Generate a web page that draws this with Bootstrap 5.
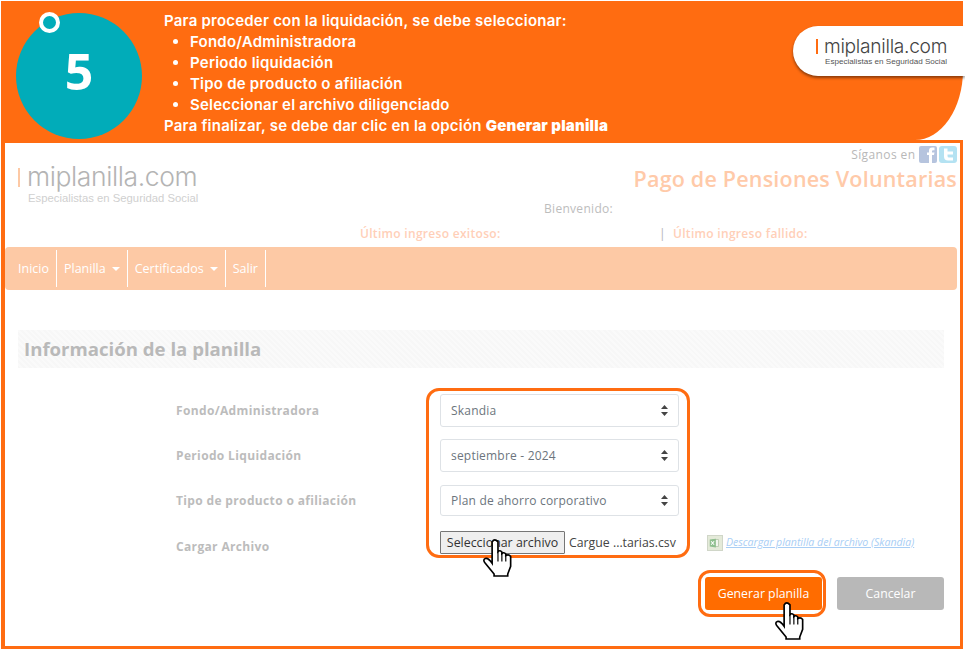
<!DOCTYPE html>
<html lang="es">
<head>
<meta charset="utf-8">
<title>Paso 5</title>
<link href="https://cdn.jsdelivr.net/npm/bootstrap@5.3.0/dist/css/bootstrap.min.css" rel="stylesheet">
<style>
html,body{margin:0;height:651px;overflow:hidden;background:#fff;font-family:"Open Sans","Liberation Sans",sans-serif}
.sheet{width:962px;margin:1px 0 0 1px;position:relative}
.banner{height:139px;background:#ff6c11;border-bottom-right-radius:48px 70px;color:#fff;position:relative}
.step{width:126px;height:126px;border-radius:50%;background:#01acb9;margin:12px 0 0 15px;flex:none;font-size:50px;font-weight:700;line-height:116px;text-align:center;position:relative}
.ring{position:absolute;left:23px;top:-1px;width:21px;height:21px;border:4px solid #fff;border-radius:50%;background:#01acb9}
.steps{margin-left:22px;padding-top:9px;font-family:Inter,"Noto Sans",sans-serif;font-size:15px;letter-spacing:.22px;font-weight:600;line-height:21px}
.steps ul{margin:0;padding-left:26px}
.pill{position:absolute;right:-2px;top:25px;width:172px;height:50px;background:#fff;border-radius:25px 0 0 25px;box-shadow:0 2px 3px rgba(0,0,0,.45);padding:9px 0 0 23px;color:#555;font-family:"Liberation Sans",sans-serif}
.brand-a{font-family:Inter,"Liberation Sans",sans-serif;font-weight:300;font-size:19.2px;line-height:22px;letter-spacing:-.3px;white-space:nowrap;color:#444}
.mk{display:inline-block;width:2px;height:15px;background:#ff6c11;margin-right:6px;vertical-align:-1px}
.brand-b{font-size:8.1px;line-height:10px;margin-left:9px;white-space:nowrap}
.frame{height:509px;border:3px solid #ff6c11;border-left-width:4px;background:#fff;color:#bbb}
.head-wrap{height:104px}
.brand-main{margin:18px 0 0 13px;font-family:"Liberation Sans",sans-serif;color:#b4b4b4;flex:none}
.brand-main .brand-a{font-size:26.5px;line-height:30px;letter-spacing:-.4px;color:#b4b4b4}
.brand-main .mk{background:#fdc9a5;height:19px;margin-right:7px;vertical-align:-1px}
.brand-main .brand-b{font-size:11.3px;line-height:14px;margin-left:10px;color:#d0d0d0}
.head-right{margin-right:3px;padding-top:3px}
.follow{font-size:12px;line-height:18px;color:#b8b8b8;letter-spacing:.4px}
.soc{display:inline-block;width:18px;height:17px;margin-left:2px;vertical-align:top}
.soc:first-of-type{margin-left:0}
.page-name{font-size:21.5px;font-weight:600;line-height:30px;color:#ffcaa9;letter-spacing:.2px}
.welcome{position:absolute;left:543px;top:199px;font-size:12px;line-height:17px;color:#bdbdbd;letter-spacing:.3px}
.last-a,.last-b,.last-c{position:absolute;top:224px;font-size:12px;font-weight:600;line-height:17px;color:#ffcfb8;letter-spacing:.3px}
.last-a{left:359px}.last-b{left:658px;color:#b5b5b5;font-weight:400}.last-c{left:672px}
.menu{height:43px;background:#fdc9a5;border-radius:4px;width:952px;padding:3px 0}
.menu a{color:#fff;font-size:12.5px;line-height:37px;padding:0 7px;border-right:1px solid #fff;text-decoration:none;display:block;height:37px}
.menu a:first-child{padding-left:13px}
.caret-w{display:inline-block;border:4px solid transparent;border-top-color:#fff;border-bottom:0;margin-left:6px;vertical-align:2px}
.sec-title{margin:40px 16px 0 13px;height:38px;background:repeating-linear-gradient(45deg,#f7f7f7 0 2px,#fafafa 2px 4px);padding-left:6px;font-size:18.6px;font-weight:700;line-height:38px;color:#b9b9b9}
.form-area{margin-top:20px;position:relative;height:170px}
.flabel{width:435px;padding-left:171px;flex:none;font-size:12px;font-weight:700;color:#bcbcbc;letter-spacing:.35px}
.flabel.low{padding-top:9px}
.frow{display:flex;align-items:center}
.hl{position:absolute;left:421px;top:0;width:264px;height:170px;border:3px solid #ff6c11;border-radius:13px}
.fields{padding-top:6px}
.fake-sel{width:239px;height:33px;font-size:12px;color:#6c757d;padding:0 10px;border:1px solid #dee2e6;border-radius:3px;display:flex;align-items:center;justify-content:space-between;background:#fff;letter-spacing:.2px}
.fake-sel.s2{height:33px}
.fake-sel.s3{height:31px}
.updn{width:7px;height:11px}
.gap-a{height:12px}.gap-b{height:13px}.gap-c{height:13px}
.pick{background:#efefef;border:1px solid #767676;border-radius:1px;height:23px;width:125px;font-size:12.4px;line-height:21px;color:#333;text-align:center;flex:none;white-space:nowrap}
.pick-name{font-size:12.3px;line-height:25px;color:#444;margin-left:4px;white-space:nowrap;width:113px;flex:none}
.dl{margin-left:25px;display:flex;align-items:center;gap:3px;font-size:10.55px;font-style:italic;color:#a9cef5;text-decoration:underline;white-space:nowrap}
.xl{width:16px;height:16px;background:#e4ead9;border:1px solid #d0d6c8;flex:none;display:block}
.acts{margin-top:19px;padding-right:16px;justify-content:flex-end;gap:15px;display:flex}
.act{height:33px;border-radius:3px;color:#fff;font-size:12.3px;line-height:34px;text-align:center}
.act-go{width:117px;background:#ff6c00;position:relative}
.act-go::after{content:"";position:absolute;inset:-7px -4px -7px -7px;border:3px solid #ff6c11;border-radius:12px}
.act-no{width:107px;background:#b8b8b8}
.hand{position:absolute;width:30px;height:39px}
.h1{left:481px;top:537px}
.h2{left:773px;top:600px}
</style>
</head>
<body>
<div class="sheet">
  <header class="banner d-flex">
    <div class="step">5<span class="ring"></span></div>
    <div class="steps">
      Para proceder con la liquidación, se debe seleccionar:
      <ul>
        <li>Fondo/Administradora</li>
        <li>Periodo liquidación</li>
        <li>Tipo de producto o afiliación</li>
        <li>Seleccionar el archivo diligenciado</li>
      </ul>
      Para finalizar, se debe dar clic en la opción <b>Generar planilla</b>
    </div>
    <div class="pill">
      <div class="brand-a"><span class="mk"></span>miplanilla.com</div>
      <div class="brand-b">Especialistas en Seguridad Social</div>
    </div>
  </header>
  <main class="frame">
    <div class="head-wrap d-flex justify-content-between">
      <div class="brand-main">
        <div class="brand-a"><span class="mk"></span>miplanilla.com</div>
        <div class="brand-b">Especialistas en Seguridad Social</div>
      </div>
      <div class="head-right text-end">
        <div class="follow">Síganos en <svg class="soc" viewBox="0 0 18 17"><rect width="18" height="17" rx="2" fill="#b6c4de"/><path d="M10 17V9H8V6.500H10V4.500Q10 1.500 13 1.500H15.500V4.200H14Q13 4.200 13 5.200V6.500H15.500L15 9H13V17Z" fill="#fff"/></svg><svg class="soc" viewBox="0 0 18 17"><rect width="18" height="17" rx="3" fill="#b4e2f2"/><path d="M5 2.500H8.500V5.500H14V8.500H8.500V10Q8.500 11.500 10 11.500H14V14.500H9Q5 14.500 5 10.500Z" fill="#fff"/></svg></div>
        <div class="page-name">Pago de Pensiones Voluntarias</div>
      </div>
    </div>
    <div class="welcome">Bienvenido:</div>
    <div class="last-a">Último ingreso exitoso:</div>
    <div class="last-b">|</div>
    <div class="last-c">Último ingreso fallido:</div>
    <nav class="menu d-flex">
      <a href="#">Inicio</a>
      <a href="#">Planilla<span class="caret-w"></span></a>
      <a href="#">Certificados<span class="caret-w"></span></a>
      <a href="#">Salir</a>
    </nav>
    <div class="sec-title">Información de la planilla</div>
    <div class="form-area">
      <div class="hl"></div>
      <div class="fields">
        <div class="frow"><div class="flabel">Fondo/Administradora</div><div class="fake-sel"><span>Skandia</span><svg class="updn" viewBox="0 0 7 11"><path d="M3.500 0 7 4H0zM3.500 11 0 7h7z" fill="#444"/></svg></div></div>
        <div class="gap-a"></div>
        <div class="frow"><div class="flabel">Periodo Liquidación</div><div class="fake-sel s2"><span>septiembre - 2024</span><svg class="updn" viewBox="0 0 7 11"><path d="M3.500 0 7 4H0zM3.500 11 0 7h7z" fill="#444"/></svg></div></div>
        <div class="gap-b"></div>
        <div class="frow"><div class="flabel">Tipo de producto o afiliación</div><div class="fake-sel s3"><span>Plan de ahorro corporativo</span><svg class="updn" viewBox="0 0 7 11"><path d="M3.500 0 7 4H0zM3.500 11 0 7h7z" fill="#444"/></svg></div></div>
        <div class="gap-c"></div>
        <div class="frow"><div class="flabel low">Cargar Archivo</div><div class="pick">Seleccionar archivo</div><div class="pick-name">Cargue ...tarias.csv</div><a class="dl" href="#"><svg class="xl" viewBox="0 0 16 16"><path d="M5 4H12V12H5Z" fill="#f2f5ee" stroke="#b9c9ae"/><path d="M2 4 9 3V13L2 12Z" fill="#8fbf8f"/><path d="M3.500 6 7 10M7 6 3.500 10" stroke="#fff" stroke-width="1.200"/></svg>Descargar plantilla del archivo (Skandia)</a></div>
      </div>
    </div>
    <div class="acts">
      <div class="act act-go">Generar planilla</div>
      <div class="act act-no">Cancelar</div>
    </div>
  </main>
  <svg class="hand h1" viewBox="0 0 30 40"><path d="M10 4Q12.500 0 16 4V14Q18 12 20 14.500V16Q22 14 24 16.500V18Q27 16 29 19V29L26 37V39H12V37L3 26Q0 22 3 21Q6 20 10 26Z" fill="#fff" stroke="#000" stroke-width="1.700"/><path d="M16 14V24M20 15V24M24 17V24" stroke="#000" stroke-width="1.200" fill="none"/></svg>
  <svg class="hand h2" viewBox="0 0 30 40"><path d="M10 4Q12.500 0 16 4V14Q18 12 20 14.500V16Q22 14 24 16.500V18Q27 16 29 19V29L26 37V39H12V37L3 26Q0 22 3 21Q6 20 10 26Z" fill="#fff" stroke="#000" stroke-width="1.700"/><path d="M16 14V24M20 15V24M24 17V24" stroke="#000" stroke-width="1.200" fill="none"/></svg>
</div>
</body>
</html>
